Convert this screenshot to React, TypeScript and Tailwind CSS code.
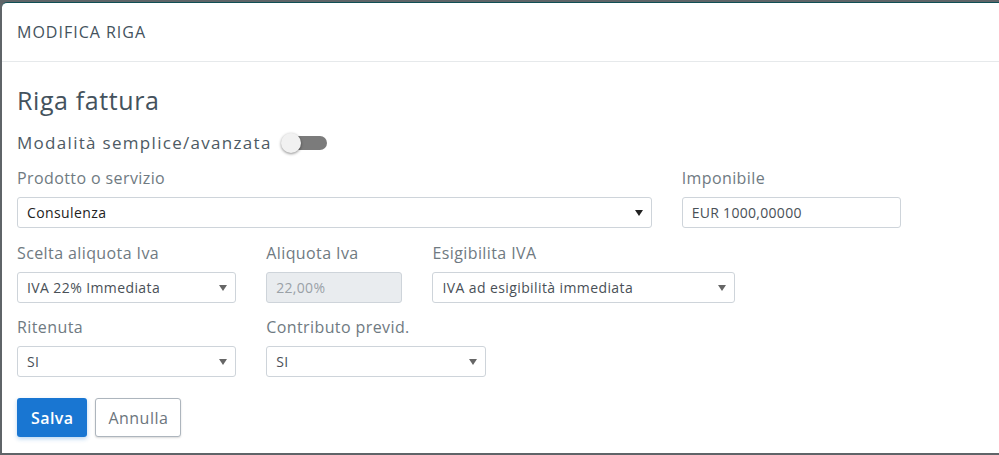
import React from 'react';

const FONT = "font-['Open_Sans',sans-serif]";

const Caret: React.FC<{ dark?: boolean }> = ({ dark }) => (
  <svg width="8" height="6" viewBox="0 0 8 6" className={dark ? 'text-[#222]' : 'text-[#666]'}>
    <path d="M0 0h8L4 6z" fill="currentColor" />
  </svg>
);

const Label: React.FC<{ children: React.ReactNode }> = ({ children }) => (
  <label className="block text-[16px] leading-[24px] tracking-[0.4px] text-[#6f7a82] mb-[7px]">{children}</label>
);

const SelectBox: React.FC<{ value: string; dark?: boolean }> = ({ value, dark }) => (
  <div className="h-[31px] flex items-center justify-between border border-[#ced4da] rounded-[3px] bg-white pl-[9px] pr-[8px]">
    <span className={`text-[14px] tracking-[0.4px] ${dark ? 'text-[#222]' : 'text-[#495057]'}`}>{value}</span>
    <Caret dark={dark} />
  </div>
);

const TextBox: React.FC<{ value: string; disabled?: boolean }> = ({ value, disabled }) => (
  <div
    className={`h-[31px] flex items-center border border-[#ced4da] rounded-[3px] pl-[9px] text-[14px] tracking-[0.3px] ${
      disabled ? 'bg-[#e9ecef] text-[#9aa1a7]' : 'bg-white text-[#495057]'
    }`}
  >
    {value}
  </div>
);

const App: React.FC = () => {
  return (
    <div className={`w-[999px] h-[455px] overflow-hidden bg-[#5f6468] pl-[2px] pt-[2px] pb-[2px] ${FONT}`}>
      <div className="h-full bg-white rounded-tl-[5px] border-t border-[#0f4f55] flex flex-col">
        <div className="h-[59px] flex items-center px-[15px] border-b border-[#e6e9eb]">
          <h5 className="text-[16px] text-[#44525d] tracking-[1px]">MODIFICA RIGA</h5>
        </div>

        <div className="px-[15px] pt-[22px]">
          <h3 className="text-[25px] leading-[32px] tracking-[0.6px] text-[#44525d]">Riga fattura</h3>

          <div className="flex items-center mt-[14px] h-[26px]">
            <span className="text-[17px] tracking-[1.3px] text-[#4d5a64]">Modalità semplice/avanzata</span>
            <div className="relative ml-[9px] w-[46px] h-[20px]">
              <div className="absolute left-[8px] right-0 top-[3px] h-[14px] rounded-full bg-[#7b7b7b]" />
              <div className="absolute left-0 top-0 w-[20px] h-[20px] rounded-full bg-[#f1f1f1] shadow-[0_1px_3px_rgba(0,0,0,0.45)]" />
            </div>
          </div>

          <div className="grid grid-cols-12 gap-x-[30px] mt-[10px]">
            <div className="col-span-8">
              <Label>Prodotto o servizio</Label>
              <SelectBox value="Consulenza" dark />
            </div>
            <div className="col-span-3">
              <Label>Imponibile</Label>
              <TextBox value="EUR 1000,00000" />
            </div>
          </div>

          <div className="grid grid-cols-12 gap-x-[30px] mt-[13px]">
            <div className="col-span-3">
              <Label>Scelta aliquota Iva</Label>
              <SelectBox value="IVA 22% Immediata" />
            </div>
            <div className="col-span-2">
              <Label>Aliquota Iva</Label>
              <TextBox value="22,00%" disabled />
            </div>
            <div className="col-span-4">
              <Label>Esigibilita IVA</Label>
              <SelectBox value="IVA ad esigibilità immediata" />
            </div>
          </div>

          <div className="grid grid-cols-12 gap-x-[30px] mt-[12px]">
            <div className="col-span-3">
              <Label>Ritenuta</Label>
              <SelectBox value="SI" />
            </div>
            <div className="col-span-3">
              <Label>Contributo previd.</Label>
              <SelectBox value="SI" />
            </div>
          </div>

          <div className="flex gap-[8px] mt-[21px]">
            <button className="h-[39px] px-[14px] rounded-[3px] bg-[#1976d2] text-white text-[16px] tracking-[0.4px] font-semibold shadow-[0_2px_4px_rgba(25,118,210,0.3)]">
              Salva
            </button>
            <button className="h-[39px] px-[12px] rounded-[3px] bg-white border border-[#adb5bd] text-[#6c757d] text-[16px] tracking-[0.5px] shadow-[0_1px_2px_rgba(0,0,0,0.15)]">
              Annulla
            </button>
          </div>
        </div>
      </div>
    </div>
  );
};

export default App;
